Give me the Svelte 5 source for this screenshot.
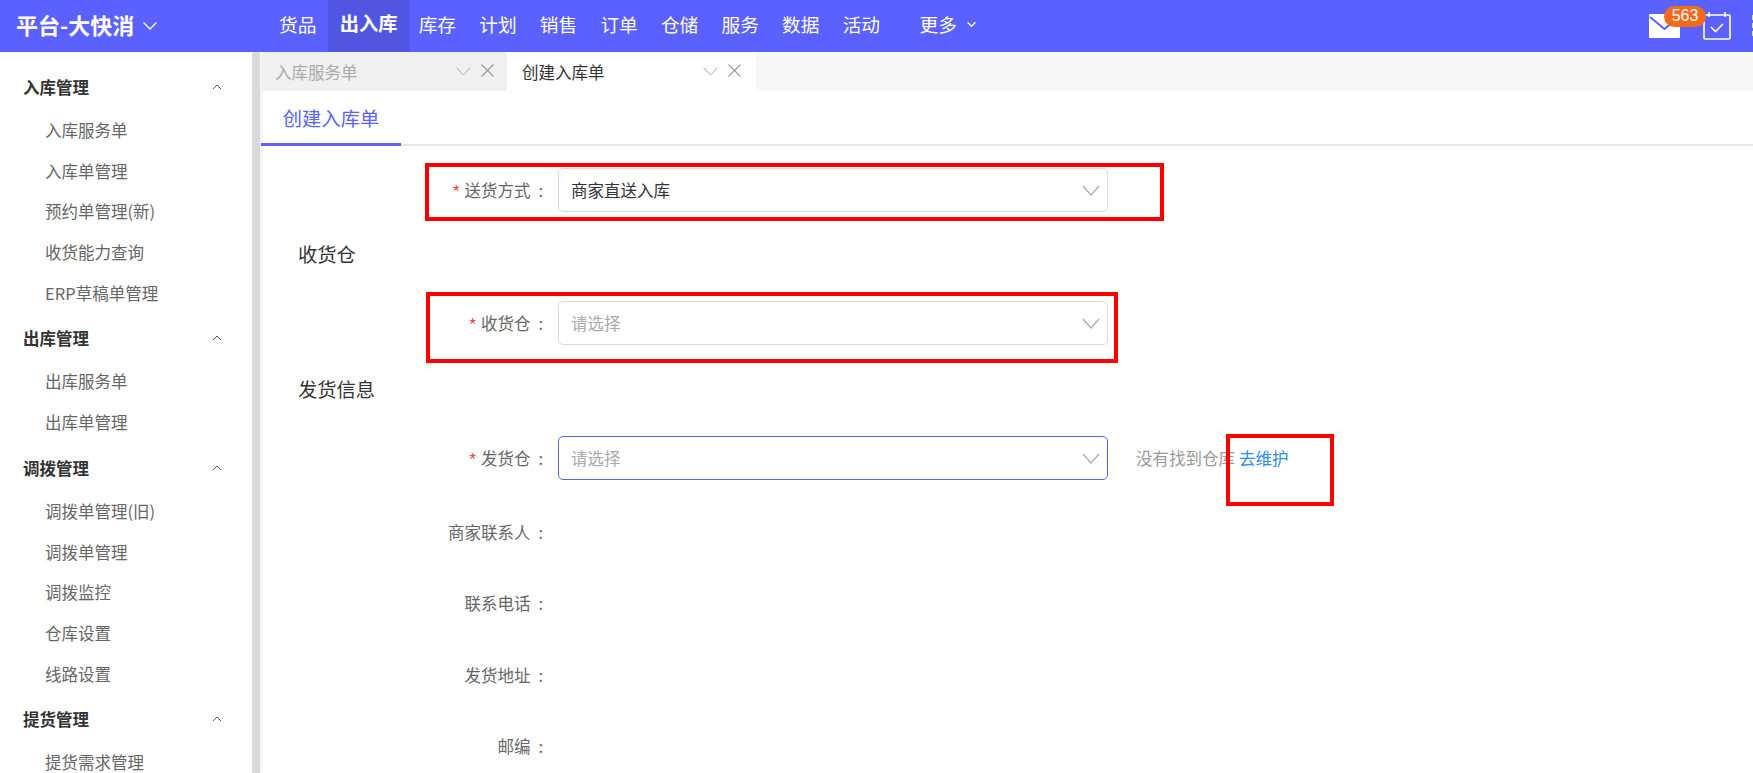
<script>
    const navItems = ['货品', '出入库', '库存', '计划', '销售', '订单', '仓储', '服务', '数据', '活动'];

    const menuGroups = [
        { title: '入库管理', items: ['入库服务单', '入库单管理', '预约单管理(新)', '收货能力查询', 'ERP草稿单管理'] },
        { title: '出库管理', items: ['出库服务单', '出库单管理'] },
        { title: '调拨管理', items: ['调拨单管理(旧)', '调拨单管理', '调拨监控', '仓库设置', '线路设置'] },
        { title: '提货管理', items: ['提货需求管理'] }
    ];

    const pageTabs = [
        { label: '入库服务单', active: false },
        { label: '创建入库单', active: true }
    ];

    const infoRows = ['商家联系人', '联系电话', '发货地址', '邮编'];
</script>

<div class="app">
    <header class="topbar">
        <div class="brand">
            <span>平台-大快消</span>
            <svg class="brand-caret" viewBox="0 0 16 10" fill="none" stroke="currentColor" stroke-width="1.3">
                <polyline points="1.5 1.5 8 8 14.5 1.5"/>
            </svg>
        </div>
        <nav class="nav">
            {#each navItems as item, i}
                <span class="nav-item" class:active={i === 1}><span class="nav-text">{item}</span></span>
            {/each}
            <span class="nav-more">
                <span class="nav-text">更多</span>
                <svg viewBox="0 0 12 8" fill="none" stroke="currentColor" stroke-width="1.5">
                    <polyline points="1.5 1.5 6 6 10.5 1.5"/>
                </svg>
            </span>
        </nav>
        <div class="tools">
            <span class="mail">
                <svg viewBox="0 0 31 24" width="31" height="24">
                    <path d="M1 0H30a1 1 0 0 1 1 1V23a1 1 0 0 1-1 1H1a1 1 0 0 1-1-1V1a1 1 0 0 1 1-1Z" fill="#fff"/>
                    <polyline points="1 3 15.5 15 30 3" fill="none" stroke="#5b61ff" stroke-width="2"/>
                </svg>
                <span class="badge">563</span>
            </span>
            <svg class="calendar" viewBox="0 0 28 28" width="28" height="28" fill="none" stroke="#fff" stroke-width="1.6">
                <rect x="1" y="3" width="26" height="24" rx="1"/>
                <line x1="6" y1="0" x2="6" y2="5"/>
                <line x1="22" y1="0" x2="22" y2="5"/>
                <polyline points="8 15 12.5 19.5 20 12"/>
            </svg>
            <span class="cut-icon"></span>
        </div>
    </header>

    <div class="body">
        <aside class="sidebar">
            {#each menuGroups as group}
                <div class="group-title">
                    <span>{group.title}</span>
                    <svg viewBox="0 0 10 6" fill="none" stroke="currentColor" stroke-width="1">
                        <polyline points="1 5 5 1 9 5"/>
                    </svg>
                </div>
                {#each group.items as item}
                    <div class="menu-item">{item}</div>
                {/each}
            {/each}
        </aside>
        <div class="scrollbar"></div>

        <main class="main">
            <div class="page-tabs">
                {#each pageTabs as tab}
                    <div class="page-tab" class:active={tab.active}>
                        <span class="page-tab-label">{tab.label}</span>
                        <svg class="tab-caret" viewBox="0 0 15 9" fill="none" stroke="currentColor" stroke-width="1">
                            <polyline points="0.5 0.5 7.5 8 14.5 0.5"/>
                        </svg>
                        <svg class="tab-close" viewBox="0 0 13 13" fill="none" stroke="currentColor" stroke-width="1.1">
                            <line x1="0.5" y1="0.5" x2="12.5" y2="12.5"/>
                            <line x1="12.5" y1="0.5" x2="0.5" y2="12.5"/>
                        </svg>
                    </div>
                {/each}
            </div>

            <div class="sub-tabs">
                <div class="sub-tab">创建入库单</div>
            </div>

            <form class="form">
                <div class="row">
                    <span class="label"><i>*</i>送货方式<b>:</b></span>
                    <div class="select">
                        <span class="value">商家直送入库</span>
                        <svg viewBox="0 0 18 11" fill="none" stroke="currentColor" stroke-width="1.2"><polyline points="1 1 9 10 17 1"/></svg>
                    </div>
                </div>

                <h3 class="section">收货仓</h3>

                <div class="row">
                    <span class="label"><i>*</i>收货仓<b>:</b></span>
                    <div class="select">
                        <span class="placeholder">请选择</span>
                        <svg viewBox="0 0 18 11" fill="none" stroke="currentColor" stroke-width="1.2"><polyline points="1 1 9 10 17 1"/></svg>
                    </div>
                </div>

                <h3 class="section second">发货信息</h3>

                <div class="row sender">
                    <span class="label"><i>*</i>发货仓<b>:</b></span>
                    <div class="select focused">
                        <span class="placeholder">请选择</span>
                        <svg viewBox="0 0 18 11" fill="none" stroke="currentColor" stroke-width="1.2"><polyline points="1 1 9 10 17 1"/></svg>
                    </div>
                    <span class="hint">没有找到仓库</span>
                    <span class="link">去维护</span>
                </div>

                {#each infoRows as row}
                    <div class="row info">
                        <span class="label">{row}<b>:</b></span>
                    </div>
                {/each}
            </form>

            <!-- hand-drawn annotation boxes on top of the screenshot -->
            <div class="mark mark-1"></div>
            <div class="mark mark-2"></div>
            <div class="mark mark-3"></div>
        </main>
    </div>
</div>

<style>
    :global(body) {
        margin: 0;
        overflow: hidden;
        background: #fff;
    }

    .app {
        width: 1753px;
        height: 773px;
        overflow: hidden;
        font-family: "Noto Sans CJK SC", "Liberation Sans", sans-serif;
        font-size: 16.5px;
        color: #666;
    }

    .topbar {
        display: flex;
        align-items: center;
        height: 52px;
        background: #5b61ff;
        color: #fff;
    }

    .brand {
        display: flex;
        align-items: center;
        gap: 8px;
        width: 267.5px;
        padding: 0 0 5px 16px;
        box-sizing: border-box;
        font-size: 22px;
        font-weight: 700;
    }

    .brand-caret {
        width: 16px;
        height: 10px;
        margin-top: 4px;
    }

    .nav {
        display: flex;
        align-items: stretch;
        height: 100%;
        font-size: 18.7px;
    }

    .nav-item {
        display: flex;
        align-items: center;
        padding: 0 11.6px;
    }

    .nav-text {
        position: relative;
        top: -3px;
    }

    .nav-item.active {
        margin-right: -2px;
        background: #5056e0;
        font-size: 19.3px;
        font-weight: 700;
    }

    .nav-more {
        display: flex;
        align-items: center;
        gap: 9px;
        margin-left: 28px;
    }

    .nav-more svg {
        width: 11px;
        height: 7px;
        margin-top: -4px;
    }

    .tools {
        display: flex;
        align-items: center;
        margin-left: auto;
        height: 100%;
    }

    .mail {
        position: relative;
        display: flex;
        margin-right: 23px;
    }

    .badge {
        position: absolute;
        top: -8px;
        left: 15px;
        width: 42px;
        height: 21px;
        border-radius: 11px;
        background: #f5691a;
        font-size: 16px;
        line-height: 19px;
        text-align: center;
        font-family: "Liberation Sans", sans-serif;
    }

    .calendar {
        margin-right: 21px;
    }

    .cut-icon {
        width: 1px;
        height: 22px;
        background: repeating-linear-gradient(#bfe6f5 0 5px, transparent 5px 8px);
    }

    .body {
        display: flex;
        height: 721px;
        overflow: hidden;
    }

    .sidebar {
        width: 252px;
        flex-shrink: 0;
        padding: 9px 0 0 23px;
        box-sizing: border-box;
    }

    .group-title {
        display: flex;
        align-items: center;
        justify-content: space-between;
        height: 44.5px;
        padding: 3.5px 30px 0 0;
        font-weight: 700;
        color: #333;
    }

    .group-title svg {
        width: 10px;
        height: 6px;
        color: #555;
    }

    .menu-item {
        height: 40.7px;
        line-height: 43px;
        padding-left: 22px;
        white-space: nowrap;
    }

    .scrollbar {
        width: 8px;
        flex-shrink: 0;
        background: #d9d9d9;
        border-radius: 3px 3px 0 0;
        box-shadow: 2px 0 3px rgba(0, 0, 0, 0.06);
    }

    .main {
        position: relative;
        flex: 1;
        min-width: 0;
        margin-left: 1px;
    }

    .page-tabs {
        display: flex;
        height: 39px;
        background: #f7f7f7;
    }

    .page-tab {
        display: flex;
        align-items: center;
        width: 246px;
        padding: 0 13px 0 14px;
        box-sizing: border-box;
        background: #f0f0f0;
        color: #aaa;
    }

    .page-tab.active {
        width: 249px;
        padding-left: 15px;
        padding-right: 15px;
        background: #fff;
        color: #333;
    }

    .page-tab-label {
        flex: 1;
    }

    .tab-caret {
        width: 15px;
        height: 9px;
        margin-right: 10px;
        color: #aaa;
    }

    .tab-close {
        width: 13px;
        height: 13px;
        color: #999;
        margin-top: -2px;
    }

    .sub-tabs {
        height: 55px;
        box-sizing: border-box;
        border-bottom: 2px solid #e6e6e6;
    }

    .sub-tab {
        width: 140px;
        height: 55px;
        box-sizing: border-box;
        border-bottom: 3px solid #5b61ff;
        color: #5b61ff;
        font-size: 19.3px;
        line-height: 55px;
        text-align: center;
    }

    .form {
        padding-top: 22px;
    }

    .row {
        display: flex;
        align-items: center;
        height: 44px;
        margin-bottom: 28px;
    }

    .label {
        width: 297px;
        flex-shrink: 0;
        text-align: right;
        padding-right: 15px;
        box-sizing: border-box;
        white-space: nowrap;
    }

    .label b {
        margin-left: 8px;
        font-weight: 400;
    }

    .label i {
        margin-right: 5px;
        color: #e8383d;
        font-family: "Liberation Sans", sans-serif;
        font-style: normal;
    }

    .select {
        display: flex;
        align-items: center;
        justify-content: space-between;
        width: 550px;
        height: 44px;
        padding: 0 7px 0 12px;
        box-sizing: border-box;
        border: 1px solid #d9d9d9;
        border-radius: 5px;
    }

    .select.focused {
        border-color: #5b61ff;
    }

    .select svg {
        width: 18px;
        height: 11px;
        color: #aaa;
    }

    .value {
        color: #333;
    }

    .placeholder {
        color: #aaa;
    }

    .section {
        height: 26px;
        margin: 0 0 35px;
        padding-left: 37px;
        font-size: 19.3px;
        font-weight: 400;
        line-height: 28px;
        color: #333;
    }

    .section.second {
        margin-top: 30px;
    }

    .sender .select {
        margin-right: 28px;
    }

    .hint {
        color: #999;
        margin-right: 4px;
    }

    .link {
        color: #2d8cf0;
    }

    .info {
        height: 27px;
        margin-bottom: 44.5px;
    }

    .sender {
        margin-bottom: 38px;
    }

    .mark {
        position: absolute;
        border: 4px solid #f00;
        box-sizing: border-box;
    }

    .mark-1 {
        left: 164px;
        top: 111px;
        width: 739px;
        height: 58px;
    }

    .mark-2 {
        left: 165px;
        top: 240px;
        width: 692px;
        height: 71px;
    }

    .mark-3 {
        left: 965px;
        top: 382px;
        width: 108px;
        height: 72px;
    }
</style>
